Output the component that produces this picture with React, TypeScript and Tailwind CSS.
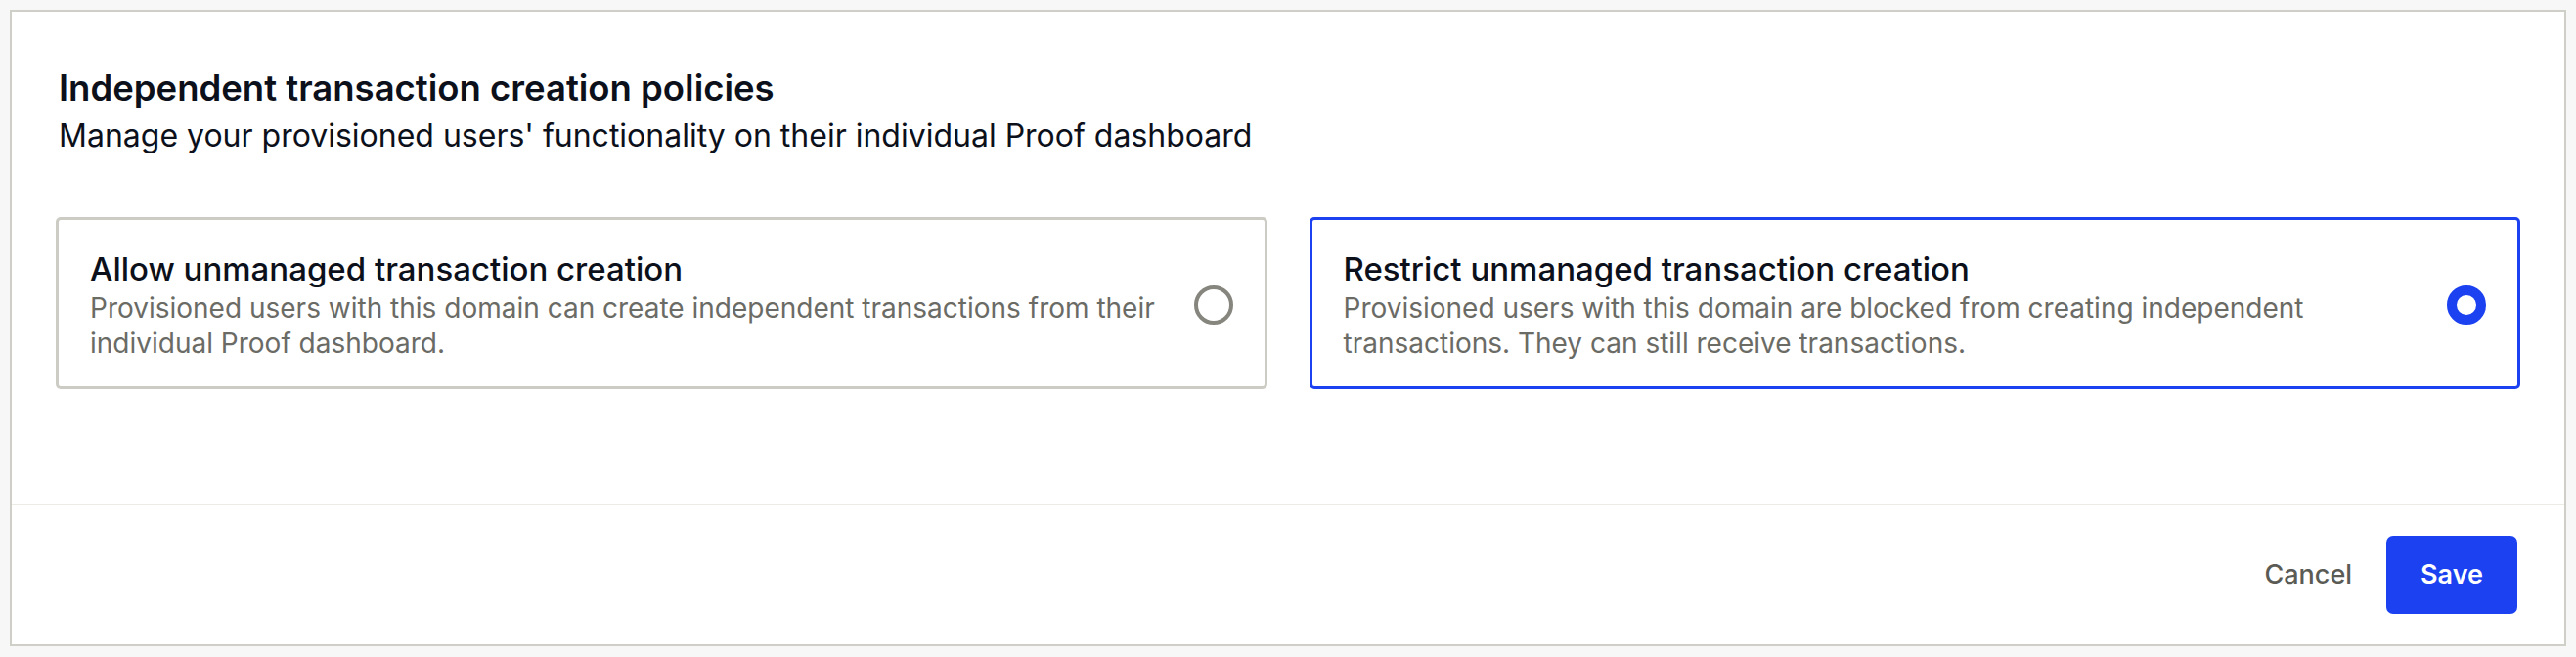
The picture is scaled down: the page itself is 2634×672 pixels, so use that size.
const options = [
  {
    id: "allow",
    title: "Allow unmanaged transaction creation",
    description:
      "Provisioned users with this domain can create independent transactions from their individual Proof dashboard.",
  },
  {
    id: "restrict",
    title: "Restrict unmanaged transaction creation",
    description:
      "Provisioned users with this domain are blocked from creating independent transactions. They can still receive transactions.",
  },
]

function OptionCard({
  title,
  description,
  selected,
}: {
  title: string
  description: string
  selected: boolean
}) {
  return (
    <div
      className={
        selected
          ? "flex items-center gap-[24px] rounded-[5px] border-[3px] border-[#1b41f0] bg-white px-[32px] pt-[30px] pb-[26px]"
          : "flex items-center gap-[24px] rounded-[5px] border-[3px] border-[#cdccc4] bg-white px-[32px] pt-[30px] pb-[26px]"
      }
    >
      <div className="flex-1">
        <p className="text-[33px] leading-[40px] font-medium text-[#0c101a]">{title}</p>
        <p className="mt-[2px] text-[28px] leading-[36px] text-[#6b6b66]">{description}</p>
      </div>
      {selected ? (
        <span className="h-[40px] w-[40px] shrink-0 rounded-full border-[10px] border-[#1b41f0] bg-white" />
      ) : (
        <span className="h-[40px] w-[40px] shrink-0 rounded-full border-[4px] border-[#86867e] bg-white" />
      )}
    </div>
  )
}

export default function App() {
  return (
    <div className="min-h-screen bg-[#f7f7f7] p-[10px] font-['Inter',sans-serif]">
      <div className="flex flex-col border-2 border-[#cfcfc7] bg-white">
        <section className="h-[503px] px-[45px] pt-[55px]">
          <div className="pl-[3px]">
            <h2 className="text-[36.5px] leading-[46px] font-semibold text-[#0c101a]">
              Independent transaction creation policies
            </h2>
            <p className="mt-[6px] text-[32px] leading-[40px] text-[#0c101a]">
              Manage your provisioned users' functionality on their individual Proof dashboard
            </p>
          </div>
          <div className="mt-[63px] grid grid-cols-2 gap-[43px]">
            {options.map((option) => (
              <OptionCard
                key={option.id}
                title={option.title}
                description={option.description}
                selected={option.id === "restrict"}
              />
            ))}
          </div>
        </section>
        <div className="h-[2px] bg-[#ecebe6]" />
        <footer className="flex items-center justify-end px-[48px] py-[31px]">
          <button className="h-[80px] px-[35px] text-[27px] font-medium text-[#5b5b55]">Cancel</button>
          <button className="h-[80px] rounded-[7px] bg-[#1b41f0] px-[35px] text-[27px] font-semibold text-white">
            Save
          </button>
        </footer>
      </div>
    </div>
  )
}
